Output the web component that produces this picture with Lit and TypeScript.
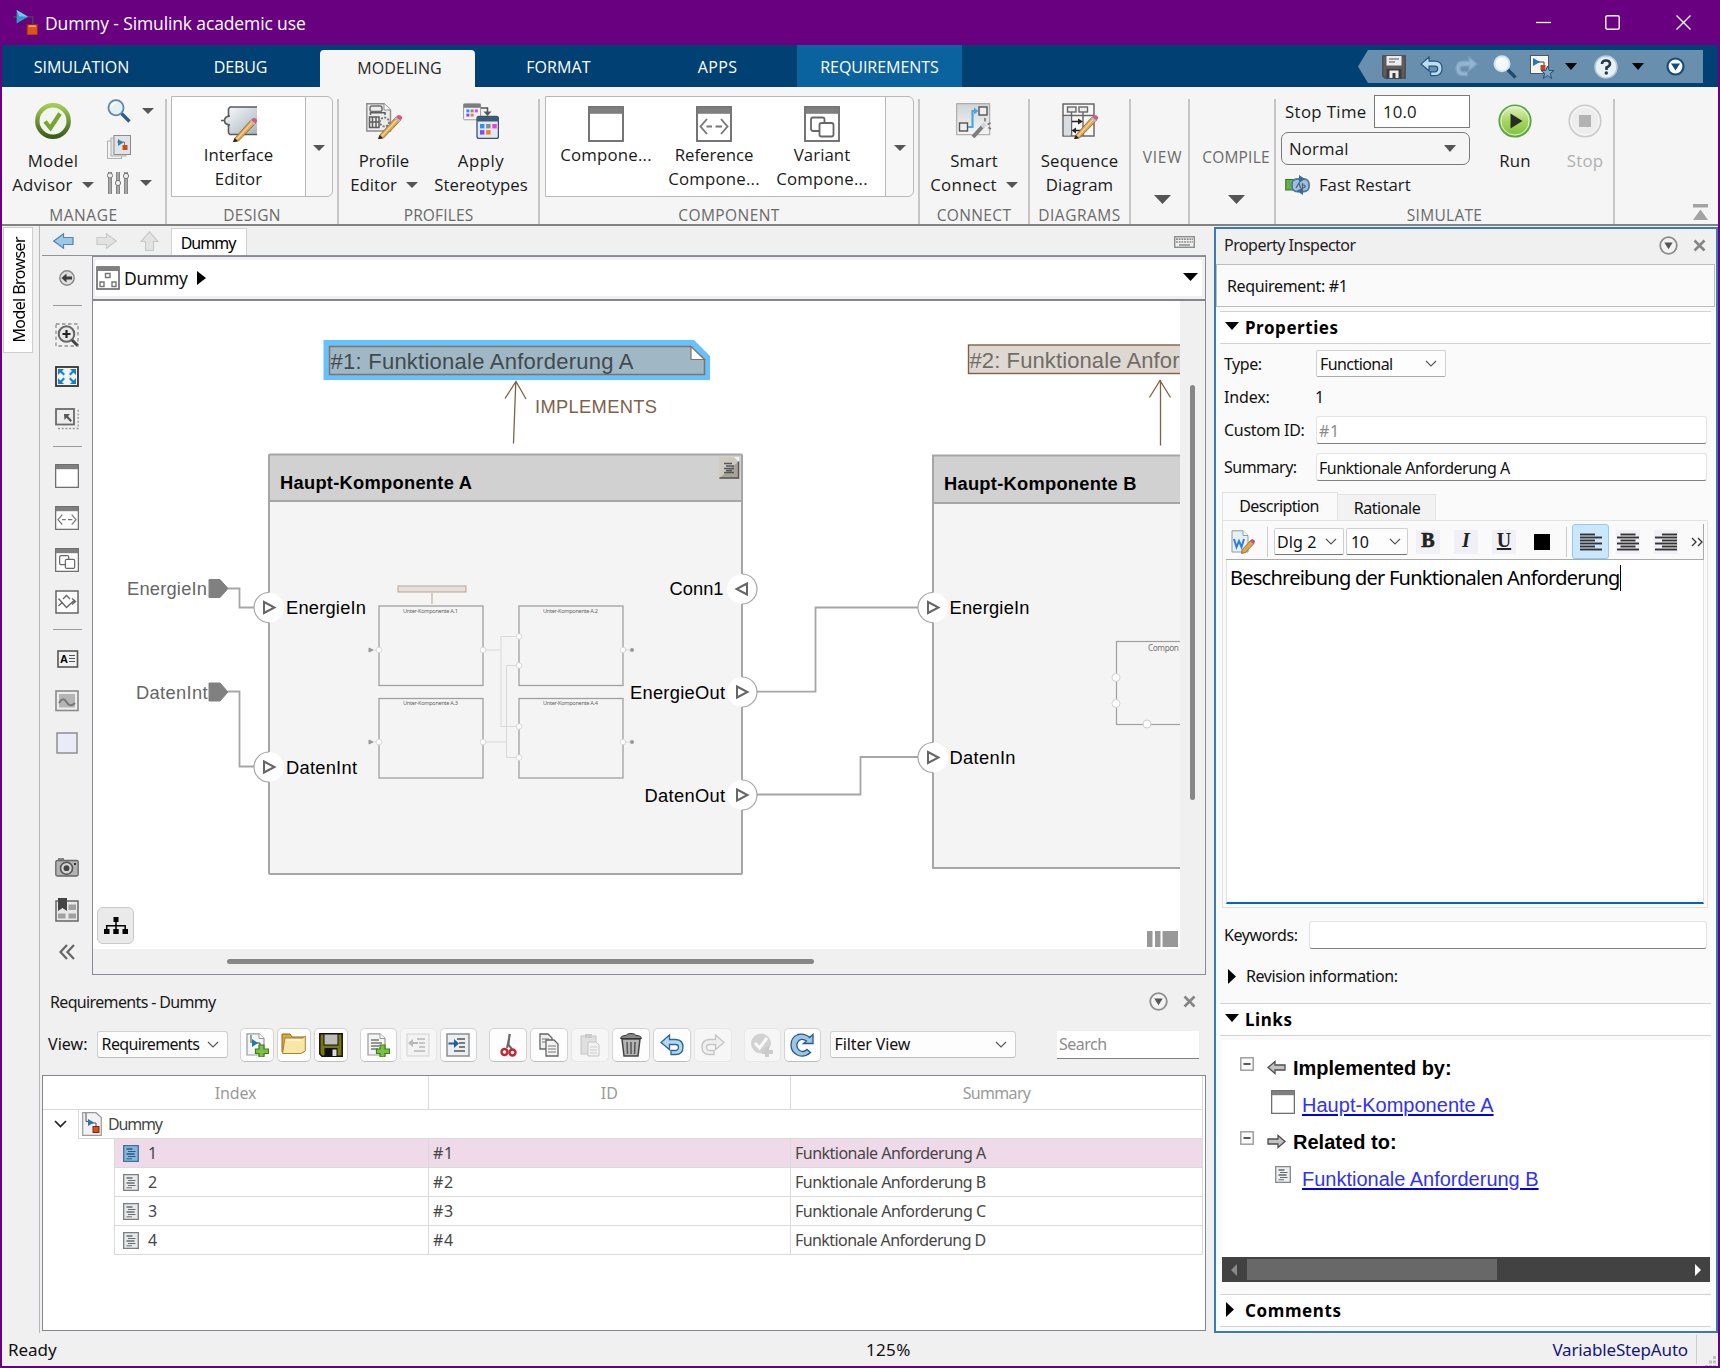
import { LitElement, html, svg, css, type TemplateResult } from "lit";
import { customElement } from "lit/decorators.js";

/* ---------- shared helpers ---------- */

/** Text whose tracking is adjusted so that it spans `w` pixels. */
const t = (s: string, w: number, cls = "") => html`<span class="t ${cls}" data-w=${w}>${s}</span>`;

const ico = (w: number, h: number, body: unknown, vb = `0 0 ${w} ${h}`) =>
  html`<svg class="ico" width=${w} height=${h} viewBox=${vb} fill="none">${body}</svg>`;

class Pane extends LitElement {
  protected updated() {
    this.renderRoot.querySelectorAll<HTMLElement>("[data-w]").forEach((el) => {
      el.style.letterSpacing = "0px";
      const box = el.getBoundingClientRect();
      const len = el.classList.contains("vert") ? box.height : box.width;
      const n = (el.textContent || "").length;
      const gap = (Number(el.dataset.w) + 1.6 - len) / n;
      el.style.letterSpacing = gap.toFixed(3) + "px";
    });
  }
}

const base = css`
  * { box-sizing: border-box; }
  :host { display: block; box-sizing: border-box; font-family: "Noto Sans", "Open Sans", sans-serif; font-size: 16px; line-height: 1; color: #1a1a1a; }
  .t { white-space: pre; display: inline-block; line-height: 22px; }
  .ico { display: block; flex: none; }
  .row { display: flex; align-items: center; }
  .col { display: flex; flex-direction: column; }
  .grow { flex: 1; }
`;

/* ---------- icons ---------- */

const caret = (w = 12, h = 6, c = "#555") => ico(w, h, svg`<path d="M0 0H${w}L${w / 2} ${h}Z" fill=${c}/>`);
const chevron = () => ico(12, 7, svg`<path d="M1 1L6 6L11 1" stroke="#555" stroke-width="1.1"/>`);
const triRight = () => ico(8, 15, svg`<path d="M0 0L8 7.500L0 15Z" fill="#000"/>`);
const triDown = () => ico(14, 8, svg`<path d="M0 0H14L7 8Z" fill="#000"/>`);

const pencil = svg`<path d="M13.500 32.500L30 14L34.500 17.500L17.500 35L12.500 36.500Z" fill="#dca552" stroke="#8a6229" stroke-width=".8"/>
  <path d="M15.500 33.500L32 15.500" stroke="#f3d49c" stroke-width="1.300"/>
  <path d="M29.500 14.500L32 12Q36 12 36.500 15L34 18Z" fill="#d8587c"/><path d="M28.500 15.500L30 14L34.500 17.500L33 19.300Z" fill="#bbb"/>
  <path d="M13.800 32L12 36.500L16.700 35Z" fill="#222"/>`;

const lens = (s: number, glass = "#e4f0f8", rim = "#5b87a8", handle = "#2d5d88") => ico(s, s, svg`
  <path d="M14.500 14.500L22.500 22.500" stroke=${handle} stroke-width="3.400"/>
  <circle cx="9" cy="8.800" r="7.600" fill=${glass} stroke=${rim} stroke-width="1.800"/>
  <path d="M4 8.500Q5 4 9.500 3.800" stroke="#fff" stroke-width="2"/>`, "0 0 24 24");

const simLogo = (w: number) => ico(w, w, svg`
  <path d="M0 6.500H5M11 6.500H19V14" stroke="#4b4a55" stroke-width="1.200"/>
  <path d="M3.500 0L14.500 6.500L3.500 13Z" fill="#2e9bc9"/><path d="M3.500 0L14.500 6.500L6 6Z" fill="#7cc6e2"/>
  <rect x="13.500" y="14" width="10" height="10" fill="#d9541e" stroke="#8d2f0c"/><path d="M15 15.500H22" stroke="#f2a27c" stroke-width="1.500"/>`, "0 0 24 24");

const checkBig = ico(36, 36, svg`
  <defs><linearGradient id="ck" x2="0" y2="1"><stop stop-color="#a5cc52"/><stop offset="1" stop-color="#3c5d1a"/></linearGradient></defs>
  <circle cx="18" cy="18" r="15.700" fill="#f2f4ef" stroke="url(#ck)" stroke-width="4.400"/>
  <path d="M10 18.500L15.500 25L25 10.500" stroke="#76a631" stroke-width="4.200"/>`);

const modelPages = ico(24, 24, svg`
  <rect x=".5" y="6" width="14" height="17.500" fill="#f3f3f3" stroke="#b0b0b0"/><rect x="4" y="3" width="15" height="18" fill="#e2e2e2" stroke="#b0b0b0"/>
  <rect x="7" y=".5" width="16.500" height="19" fill="#dfe4e8" stroke="#8c8c8c"/>
  <path d="M11 4L16.500 7.500L11 11Z" fill="#2e86b9"/><rect x="15.500" y="10" width="5" height="5" fill="#cf4a1c"/><path d="M10 7H17.500V10" stroke="#666" stroke-width=".8"/>`);

const sliders = ico(22, 24, svg`
  <path d="M3 1V23M11 1V23M19 1V23" stroke="#858585" stroke-width="4"/><path d="M3 1V23M11 1V23M19 1V23" stroke="#c9c9c9" stroke-width="1"/>
  <circle cx="3" cy="4.500" r="2.600" fill="#efefef" stroke="#777"/><circle cx="11" cy="12" r="2.600" fill="#efefef" stroke="#777"/><circle cx="19" cy="5" r="2.600" fill="#efefef" stroke="#777"/>`);

const interfaceIcon = ico(36, 36, svg`
  <defs><linearGradient id="ie" x2="1" y2="1"><stop stop-color="#fbfcfd"/><stop offset="1" stop-color="#a5b4c0"/></linearGradient></defs>
  <path d="M36 1H9L7.500 3V10Q3.500 10.500 3.500 14.500Q3.500 18.500 7.500 19V27L9 28.500H36Z" fill="url(#ie)"/>
  <path d="M36 1H9L7.500 3V10M7.500 19V27L9 28.500H36" stroke="#5a5a5a" stroke-width="1.600"/>
  <path d="M0 14.500H3.500M9 10Q3.500 10.500 3.500 14.500Q3.500 18.500 9 19" stroke="#5a5a5a" stroke-width="1.700"/>${pencil}`);

const profileIcon = ico(36, 36, svg`
  <path d="M.8 .8H18L24.500 7V28H.8Z" fill="#ececec" stroke="#8c8c8c" stroke-width="1.400"/><path d="M18 .8V7H24.500" fill="#fff" stroke="#8c8c8c"/>
  <rect x="4" y="3" width="12" height="5.500" rx="2" stroke="#6f6f6f" stroke-width="1.500"/><path d="M4.500 12V9.800H19V12M3.500 14H13V24.500H3.500ZM6.500 14V24.500M10 14V24.500M3.500 19H13" stroke="#5d5d5d" stroke-width="1.500"/>
  <circle cx="18.500" cy="19" r="4.500" stroke="#777" stroke-width="1.800" stroke-dasharray="2 1.400"/>${pencil}`);

const dots = (x: number, y: number, s: number) => svg`
  <rect x=${x} y=${y} width=${s} height=${s} fill="#2f8ff0"/><rect x=${x + s * 1.4} y=${y} width=${s} height=${s} fill="#8a8a8a"/><rect x=${x + s * 2.8} y=${y} width=${s} height=${s} fill="#f43be0"/>
  <rect x=${x} y=${y + s * 1.4} width=${s} height=${s} fill="#8748f0"/><rect x=${x + s * 1.4} y=${y + s * 1.4} width=${s} height=${s} fill="#fb7a1c"/>`;

const stereoIcon = ico(36, 36, svg`
  <rect x=".6" y=".8" width="17" height="16" rx="1" fill="#f2f5f8" stroke="#9b9b9b"/><rect x=".6" y=".8" width="17" height="4" fill="#7d7d7d"/>${dots(3.4, 6.4, 3)}
  <path d="M18 5H24.500V9" stroke="#555" stroke-width="1.500"/><path d="M20.500 8.500H28.500L24.500 13Z" fill="#555"/>
  <rect x="14" y="13.500" width="21.400" height="22" rx="2" fill="#dfeaf5" stroke="#37536e" stroke-width="1.300"/><path d="M14 18.500V15Q14 13.500 16 13.500H33.500Q35.400 13.500 35.400 15V18.500Z" fill="#3d5a76"/>${dots(17, 21, 4.400)}`);

const winBody = (kind: string) => svg`
  <rect x="1" y="1" width="34" height="34" fill="#fff" stroke="#666" stroke-width="1.800"/><rect x="1.500" y="1.500" width="33" height="6.300" fill="#7f7f7f"/>
  ${kind === "ref" ? svg`<path d="M11 13L4.500 20.500L11 28M25 13L31.500 20.500L25 28" stroke="#777" stroke-width="1.900"/><path d="M10.500 20.500H16M19.500 20.500H26" stroke="#777" stroke-width="1.900"/>` : ""}
  ${kind === "var" ? svg`<rect x="7" y="11.500" width="13.500" height="13.500" rx="2" stroke="#666" stroke-width="1.800"/><rect x="15.500" y="17" width="14" height="13.500" rx="2" fill="#fff" stroke="#666" stroke-width="1.800"/>` : ""}`;
const win = (kind: string, s = 36) => ico(s, s, winBody(kind), "0 0 36 36");

const smartIcon = ico(36, 36, svg`
  <defs><linearGradient id="sm" x2="0" y2="1"><stop stop-color="#d2d4d6"/><stop offset="1" stop-color="#f5f5f5"/></linearGradient></defs>
  <rect x=".7" y=".7" width="33" height="31" fill="url(#sm)" stroke="#a0a0a0"/>
  <rect x="3.500" y="20" width="8" height="8" fill="#eee" stroke="#555" stroke-width="1.400"/><rect x="23" y="4" width="8" height="8" fill="#eee" stroke="#555" stroke-width="1.400"/>
  <path d="M12 24H16.500V8H20" stroke="#4aa7e4" stroke-width="2.200"/><path d="M18 4.500L22.500 8L18 11.500Z" fill="#4aa7e4"/>
  <path d="M17 34L27 23" stroke="#7d7d7d" stroke-width="4"/><path d="M26 24L29 20.500" stroke="#d2d2d2" stroke-width="4"/>
  <path d="M29 15V18.500M34.500 20L31.500 21.500M35 26L32.500 24.500" stroke="#777" stroke-width="1.600"/>`);

const sequenceIcon = ico(36, 36, svg`
  <rect x="1" y="1" width="31" height="32" fill="#f7f7f7" stroke="#686868" stroke-width="1.500"/>
  <rect x="5.500" y="4" width="8.500" height="5" fill="#eee" stroke="#666" stroke-width="1.400"/><rect x="17" y="4" width="8.500" height="5" fill="#eee" stroke="#666" stroke-width="1.400"/>
  <path d="M1 12.500H32M9.500 9V33M21 9V33" stroke="#666" stroke-width="1.400"/><rect x="2" y="13.500" width="6.500" height="19" fill="#d8dde2"/>
  <path d="M10 18.500H18M12.500 27.500H20" stroke="#222" stroke-width="1.600"/><path d="M16 15.500L21 18.500L16 21.500ZM14 24.500L9.500 27.500L14 30.500Z" fill="#222"/>${pencil}`);

const fastRestart = ico(25, 20, svg`
  <rect x=".7" y="4.500" width="9" height="10.500" fill="#65b143" stroke="#397324"/><rect x="7" y="4" width="17" height="12.500" rx="5" fill="#9fc0dc" stroke="#4c7aa4" stroke-width="1.800"/>
  <path d="M14 0L20 4L14 8ZM18 20L12 16L18 12Z" fill="#3c6a96"/><path d="M11 13L14 8L15.500 13M17.500 8V13Q20.500 13 20 10.500Q19 9.500 17.500 10.500" stroke="#4a5f74" stroke-width="1.200"/>`);

const runIcon = ico(34, 34, svg`
  <defs><linearGradient id="rn" x2="0" y2="1"><stop stop-color="#e2f3cc"/><stop offset=".5" stop-color="#a7d660"/><stop offset="1" stop-color="#7dbf3d"/></linearGradient></defs>
  <circle cx="17" cy="17" r="15.800" fill="url(#rn)" stroke="#5aa348" stroke-width="1.600"/><circle cx="17" cy="17" r="14" stroke="#e4f5cf" stroke-width="1"/>
  <path d="M12.500 9.500L24.500 17L12.500 24.500Z" fill="#262e22"/>`);
const stopIcon = ico(34, 34, svg`
  <circle cx="17" cy="17" r="15.800" fill="#ededed" stroke="#cbcbcb" stroke-width="1.600"/><circle cx="17" cy="17" r="14" stroke="#fafafa"/><rect x="11" y="11" width="12" height="12" fill="#b3b3b3"/>`);

const undoPath = "M1 9.500L9.500 2V6.500H16Q23 7 23 14Q23 21.500 15.500 21.500H11V17.500H15Q18.500 17.500 18.500 14Q18.500 11.500 15.500 11.500H9.500V16.500Z";
const undo = (fill: string, stroke: string, w = 24) => ico(w, w, svg`<path d=${undoPath} fill=${fill} stroke=${stroke} stroke-width="1.300"/>`, "0 0 24 24");
const redo = (fill: string, stroke: string, w = 24) => ico(w, w, svg`<g transform="translate(24 0) scale(-1 1)"><path d=${undoPath} fill=${fill} stroke=${stroke} stroke-width="1.300"/></g>`, "0 0 24 24");

const floppyGrey = ico(24, 24, svg`
  <path d="M.8 .8H23.200V23.200H3L.8 21Z" fill="#5d5d5d" stroke="#4a4a4a" stroke-width="1.300"/>
  <rect x="4.500" y="1" width="15" height="9.500" fill="#ececec"/><path d="M7 4H17M7 7H13" stroke="#888" stroke-width="1.500"/>
  <rect x="4.500" y="14" width="15" height="9.500" fill="#3c3c3c"/><path d="M7.500 15.500H16.500V23H13.500V18H10.500V23H7.500Z" fill="#eee"/>`);
const floppyDark = ico(24, 24, svg`
  <path d="M.8 .8H23.200V23.200H3L.8 21Z" fill="#77760f" stroke="#111" stroke-width="1.500"/>
  <rect x="5" y="1" width="14" height="11" fill="#bdbdbd" stroke="#111"/><rect x="5.500" y="15" width="13" height="8.500" fill="#111"/><rect x="13.500" y="16.500" width="4" height="6.500" fill="#ddd"/>`);

const closeX = ico(13, 13, svg`<path d="M1.500 1.500L11.500 11.500M11.500 1.500L1.500 11.500" stroke="#858585" stroke-width="2.600"/>`);
const menuDot = ico(19, 19, svg`<circle cx="9.500" cy="9.500" r="8.300" fill="#f3f3f3" stroke="#8d8d8d" stroke-width="1.800"/><path d="M5.300 6.500H13.700L9.500 13.200Z" fill="#555"/>`);

const note = (w: number, h: number, fill: string, edge: string, line: string) => ico(w, h, svg`
  <path d="M.7 .7H15.300V16.300H.7Z" fill=${fill} stroke=${edge} stroke-width="1.300"/>
  <path d="M3.500 4H9.500M3.500 9H11.500" stroke=${line} stroke-width="1.300"/><path d="M5 6.500H12.500M5 11.500H12.500M3.500 13.800H9" stroke=${line} stroke-width="1"/>`, "0 0 16 17");

/* ---------- ribbon ---------- */

@customElement("tool-strip")
class ToolStrip extends Pane {
  static styles = [base, css`
    :host { font-family: "Open Sans", "Noto Sans", sans-serif; font-size: 16.800px; }
    .tabs { height: 42px; background: #004073; color: #fff; font-size: 16px; align-items: stretch; }
    .tab { width: 159px; display: flex; align-items: center; justify-content: center; padding-top: 2px; }
    .tab.active { width: 155px; margin: 5px 4px 0 0; background: #f5f5f5; color: #262626; border-radius: 4px 4px 0 0; padding: 0 0 2px 4px; }
    .tab.ctx { width: 165px; background: #0a629f; }
    .qat { width: 345px; height: 33px; margin: 5px 15px 0 0; padding-left: 24px; background: #688fae; clip-path: polygon(10px 0, 100% 0, 100% 100%, 10px 100%, 0 50%); }
    .q1 { margin-left: 14px; } .q2 { margin-left: 12px; } .q3 { margin-left: 15px; } .q4 { margin-left: 13px; } .q5 { margin-left: 11px; } .q6 { margin-left: 17px; } .q7 { margin-left: 14px; } .q8 { margin-left: 22px; }
    .strip { height: 139px; background: #f5f5f5; border-bottom: 2px solid #828282; align-items: flex-start; }
    .sec { margin-top: 12px; height: 125px; border-right: 2px solid #c6c6c6; display: flex; flex-direction: column; flex: none; }
    .body { height: 106px; display: flex; align-items: flex-start; }
    .cap { height: 20px; display: flex; justify-content: center; align-items: center; color: #6a6a6a; font-size: 15.500px; padding-top: 2px; }
    .w-manage { width: 165px; } .w-design { width: 172px; } .w-prof { width: 201px; } .w-comp { width: 380px; }
    .w-conn { width: 110px; } .w-diag { width: 101px; } .w-view { width: 59px; } .w-compile { width: 86px; } .w-sim { width: 339px; }
    .big { display: flex; flex-direction: column; align-items: center; padding-top: 4px; width: 100%; flex: none; }
    .big .ico:first-child { margin-bottom: 9px; }
    .ln { height: 24px; display: flex; align-items: center; gap: 9px; padding-top: 2px; }
    .ln .ico.ico { margin: 0; }
    .b102 { width: 102px; } .b90 { width: 90px; } .b104 { width: 104px; }
    .small { gap: 12px; padding-left: 3px; }
    .small .row { gap: 11px; height: 24px; }
    .gal { margin-top: -3px; height: 101px; border: 1px solid #b9b9b9; border-radius: 0 6px 6px 0; display: flex; background: #f7f7f7; }
    .gal-d { margin-left: 4px; width: 162px; } .gal-c { margin-left: 5px; width: 369px; }
    .items { flex: 1; background: #fff; display: flex; border-right: 1px solid #b9b9b9; }
    .gal-c .items { padding-left: 6px; }
    .item { width: 108px; display: flex; flex-direction: column; align-items: center; padding-top: 9px; }
    .gal-d .item { width: 133px; }
    .more { width: 27px; display: flex; align-items: center; justify-content: center; padding-top: 2px; }
    .tall { height: 126px; align-items: center; padding: 47px 0 0 8px; color: #6a6a6a; font-size: 15.500px; }
    .tall .ico { margin-top: 27px; }
    .w-view .tall { padding-left: 6px; }
    .sim { margin: -4px 10px 0 5px; width: 189px; gap: 4px; flex: none; }
    .stop { height: 33px; padding-left: 4px; justify-content: space-between; }
    .edit { width: 96px; height: 33px; border: 1px solid #7a7a7a; background: #fff; padding-left: 8px; }
    .pick { height: 33px; border: 1px solid #7a7a7a; border-radius: 7px; padding: 0 13px 0 7px; justify-content: space-between; }
    .fast { height: 32px; gap: 9px; padding-left: 4px; }
    .b70 { width: 70px; padding-top: 5px; } .b70 .ico:first-child { margin-bottom: 10px; }
    .dim { color: #b0b0b0; }
    .fold { align-self: flex-end; margin: 0 10px 4px auto; }
  `];

  private gallery(items: [TemplateResult, [string, number][]][], cls: string) {
    return html`<div class="gal ${cls}"><div class="items">
      ${items.map(([icon, lines]) => html`<div class="item">${icon}${lines.map(([s, w]) => html`<div class="ln">${t(s, w)}</div>`)}</div>`)}
    </div><div class="more">${caret()}</div></div>`;
  }

  private big(icon: TemplateResult, a: [string, number], b?: [string, number], more = false, cls = "") {
    return html`<div class="big ${cls}">${icon}<div class="ln">${t(a[0], a[1])}</div>
      ${b ? html`<div class="ln">${t(b[0], b[1])}${more ? caret() : ""}</div>` : ""}</div>`;
  }

  render() {
    return html`
      <div class="tabs row">
        <div class="tab">${t("SIMULATION", 94)}</div><div class="tab">${t("DEBUG", 52)}</div>
        <div class="tab active">${t("MODELING", 83)}</div>
        <div class="tab">${t("FORMAT", 63)}</div><div class="tab">${t("APPS", 38)}</div>
        <div class="tab ctx">${t("REQUIREMENTS", 117)}</div>
        <div class="grow"></div>
        <div class="qat row">
          ${floppyGrey}
          <div class="q1">${undo("#bcdcf2", "#27567f", 23)}</div>
          <div class="q2">${redo("#93b5cf", "#7da2bf", 23)}</div>
          <div class="q3">${lens(24, "#f2f8fc", "#cfe0ee", "#22496e")}</div>
          <div class="q4">${ico(24, 24, svg`<rect x=".5" y=".5" width="18" height="18" fill="#f4f4f4" stroke="#555"/><path d="M3 3L10 7L3 11Z" fill="#2478ae"/><path d="M8 7H14V12" stroke="#444"/><rect x="10.500" y="10" width="5" height="5" fill="#c8401d"/><path d="M17.500 11L19.200 15.500H24L20.300 18.500L21.700 23.500L17.500 20.500L13.300 23.500L14.700 18.500L11 15.500H15.800Z" fill="#7fa9cb" stroke="#284e72"/>`)}</div>
          <div class="q5">${caret(12, 7, "#000")}</div>
          <div class="q6">${ico(24, 24, svg`<circle cx="12" cy="12" r="11" fill="#e9f1f7" stroke="#b4cadc" stroke-width="1.500"/><path d="M8 9Q8 5.500 12 5.500Q16 5.500 16 9Q16 11 12.500 12.500V15" stroke="#24384a" stroke-width="2.600"/><circle cx="12.300" cy="18" r="1.700" fill="#24384a"/>`)}</div>
          <div class="q7">${caret(12, 7, "#000")}</div>
          <div class="q8">${ico(19, 19, svg`<circle cx="9.500" cy="9.500" r="8" fill="#fff" stroke="#194a7c" stroke-width="2.200"/><path d="M5 6.500H14L9.500 13.500Z" fill="#194a7c"/>`)}</div>
        </div>
      </div>
      <div class="strip row">
        <div class="sec w-manage"><div class="body">
          ${this.big(checkBig, ["Model", 49], ["Advisor", 59], true, "b102")}
          <div class="small col">
            <div class="row">${lens(24)}${caret()}</div>
            <div class="row">${modelPages}</div>
            <div class="row">${sliders}${caret()}</div>
          </div></div><div class="cap">${t("MANAGE", 67)}</div></div>
        <div class="sec w-design"><div class="body">
          ${this.gallery([[interfaceIcon, [["Interface", 68], ["Editor", 46]]]], "gal-d")}</div><div class="cap">${t("DESIGN", 56)}</div></div>
        <div class="sec w-prof"><div class="body">
          ${this.big(profileIcon, ["Profile", 49], ["Editor", 45], true, "b90")}
          ${this.big(stereoIcon, ["Apply", 45], ["Stereotypes", 92], false, "b104")}</div><div class="cap">${t("PROFILES", 68)}</div></div>
        <div class="sec w-comp"><div class="body">
          ${this.gallery([[win("plain"), [["Compone...", 90]]], [win("ref"), [["Reference", 77], ["Compone...", 90]]], [win("var"), [["Variant", 55], ["Compone...", 90]]]], "gal-c")}
          </div><div class="cap">${t("COMPONENT", 100)}</div></div>
        <div class="sec w-conn"><div class="body">${this.big(smartIcon, ["Smart", 46], ["Connect", 65], true)}</div><div class="cap">${t("CONNECT", 73)}</div></div>
        <div class="sec w-diag"><div class="body">${this.big(sequenceIcon, ["Sequence", 76], ["Diagram", 66])}</div><div class="cap">${t("DIAGRAMS", 81)}</div></div>
        <div class="sec w-view"><div class="tall col">${t("VIEW", 38)}${caret(17, 9)}</div></div>
        <div class="sec w-compile"><div class="tall col">${t("COMPILE", 66)}${caret(17, 9)}</div></div>
        <div class="sec w-sim"><div class="body">
          <div class="sim col">
            <div class="stop row">${t("Stop Time", 80)}<div class="edit row">${t("10.0", 32)}</div></div>
            <div class="pick row">${t("Normal", 58)}${caret(12, 7)}</div>
            <div class="fast row">${fastRestart}${t("Fast Restart", 90)}</div>
          </div>
          ${this.big(runIcon, ["Run", 30], undefined, false, "b70")}
          <div class="dim">${this.big(stopIcon, ["Stop", 35], undefined, false, "b70")}</div>
          </div><div class="cap">${t("SIMULATE", 74)}</div></div>
        <div class="fold">${ico(15, 16, svg`<rect width="15" height="3.500" fill="#a3a3a3"/><path d="M7.500 5.500L15 16H0Z" fill="#a3a3a3"/>`)}</div>
      </div>`;
  }
}

/* ---------- model canvas ---------- */

const port = (x: number, y: number, dir: "in" | "out" | "conn", side: "l" | "r") => svg`
  <circle cx=${x} cy=${y} r="15" fill="#fff"/>
  <path d="M${x} ${y - 15}A15 15 0 0 ${side === "l" ? 0 : 1} ${x} ${y + 15}" stroke="#a6a6a6" stroke-width="1.200"/>
  ${dir === "conn"
    ? svg`<path d="M${x + 5} ${y - 5.500}V${y + 5.500}L${x - 5.500} ${y}Z" stroke="#666" stroke-width="2"/>`
    : svg`<path d="M${x - 5} ${y - 5.500}V${y + 5.500}L${x + 5.500} ${y}Z" stroke="#666" stroke-width="2"/>`}`;

const mini = (x: number, y: number, n: number, ins: number[], outY: number) => svg`
  <rect x=${x} y=${y} width="104" height="79.500" stroke="#a0a0a0" stroke-width="1.300"/>
  <text class="tiny" x=${x + 24} y=${y + 6.500} textLength="55">Unter-Komponente A.${n}</text>
  ${[...ins.map((iy) => [x, iy]), [x + 104, outY]].map(([cx, cy]) => svg`<circle cx=${cx} cy=${cy} r="2.800" fill="#fff" stroke="#d2d2d2" stroke-width=".8"/>`)}`;

@customElement("model-editor")
class ModelEditor extends Pane {
  static styles = [base, css`
    :host { display: flex; flex-direction: column; height: 749px; }
    .nav { height: 29px; padding-left: 13px; flex: none; }
    .a2 { margin-left: 22px; } .a3 { margin-left: 23px; }
    .doc { align-self: flex-end; margin-left: 12px; width: 76px; height: 27px; background: #fff; border: 1px solid #d2d2d2; border-bottom: 0; display: flex; justify-content: center; align-items: center; color: #000; padding: 1px 2px 0 0; }
    .kb { margin: 3px 11px 0 auto; }
    .lower { display: flex; height: 720px; border-top: 1px solid #8c959a; margin-left: 2px; }
    .palette { width: 50px; align-items: center; padding-top: 10px; }
    .sep { width: 29px; height: 1px; background: #9b9b9b; margin: 15px 0 17px; }
    .gap { margin-top: 18px; flex: none; } .far { margin-top: 101px; }
    .frame { flex: 1; border: 1px solid #878a94; display: flex; flex-direction: column; background: #f0f0f0; }
    .crumb { height: 42px; border: 3px solid #f0f0f0; border-width: 3px 3px 3px 2px; background: #fff; padding: 0 4px 0 1px; font-size: 17.500px; color: #111; }
    .crumb .t { margin: 0 9px 0 4px; }
    .crumb .end { margin-left: auto; padding-bottom: 3px; }
    .view { border-top: 2px solid #858590; display: grid; grid-template: 648px 25px / 1087px 25px; }
    .plane { background: #fff; position: relative; }
    .plane > svg { display: block; }
    .tree { position: absolute; left: 4px; top: 606px; width: 37px; height: 37px; border: 1px solid #c9c9c9; border-radius: 6px; background: #eaeaea; display: flex; align-items: center; justify-content: center; }
    .vbar { width: 5px; height: 415px; margin: 84px 0 0 10px; border-radius: 3px; background: #878787; }
    .hbar { height: 5px; width: 587px; margin: 10px 0 0 134px; border-radius: 3px; background: #878787; }
    text { font-family: "Liberation Sans", Arial, sans-serif; font-size: 18.300px; fill: #000; }
    .bold { font-weight: bold; }
    .ext { fill: #666; }
    .tiny { font-family: "Noto Sans", sans-serif; font-size: 5.600px; fill: #666; }
    .mid { font-family: "Noto Sans", sans-serif; font-size: 8.300px; fill: #777; }
    .req { font-size: 22px; fill: #424a4d; }
    .req2 { fill: #6f6c69; }
    .impl { fill: #7d6247; }
    .glyph { font: bold 11px "Liberation Sans", sans-serif; }
  `];

  private palette() {
    const arrows = svg`<path d="M3 3H9L7 5L10 8L8.500 9.500L5.500 6.500L3 9Z" fill="#1b7fc4"/>`;
    return html`<div class="palette col">
      ${ico(24, 24, svg`<circle cx="12" cy="12" r="7.200" fill="#ddd" stroke="#888" stroke-width="1.400"/><path d="M6.500 12L11.500 7.500V10.500H17V13.500H11.500V16.500Z" fill="#3c3c3c"/>`)}
      <div class="sep"></div>
      ${ico(24, 24, svg`<rect x="1" y="1" width="22" height="22" stroke="#909090" stroke-width="1.300" stroke-dasharray="3.500 2.500"/><circle cx="11.500" cy="11" r="7.800" fill="#e8e8e8" stroke="#666" stroke-width="2"/><path d="M17 17L22.500 22.500" stroke="#444" stroke-width="3"/><path d="M11.500 7V15M7.500 11H15.500" stroke="#222" stroke-width="2.200"/>`)}
      <div class="gap">${ico(24, 24, svg`<rect x="1" y="2" width="22" height="19" fill="#eef5fa" stroke="#333" stroke-width="1.800"/><g transform="translate(0 1)">${arrows}</g><g transform="translate(24 1) scale(-1 1)">${arrows}</g><g transform="translate(0 22) scale(1 -1)">${arrows}</g><g transform="translate(24 22) scale(-1 -1)">${arrows}</g>`)}</div>
      <div class="gap">${ico(24, 24, svg`<path d="M3 21.500H23.200V2" stroke="#999" stroke-width="1.300" stroke-dasharray="2 1.700"/><rect x="1" y="2" width="18" height="15.500" fill="#ededed" stroke="#6a6a6a" stroke-width="1.800"/><path d="M9 7H15L13 9L17 13.500L15.500 15L11.500 10.800L9.500 13Z" fill="#555"/>`)}</div>
      <div class="sep"></div>
      ${win("plain", 24)}<div class="gap">${win("ref", 24)}</div><div class="gap">${win("var", 24)}</div>
      <div class="gap">${ico(24, 24, svg`<rect x="1" y="1" width="22" height="22" fill="#fff" stroke="#666" stroke-width="1.500"/><path d="M3.500 8.500L11.500 17.500L18 11.500H20M3.500 16L7 12.500M8 9L11.500 5.500L15 9M17 8.500L20.500 11.500L17 14.500" stroke="#666" stroke-width="1.400"/>`)}</div>
      <div class="sep"></div>
      ${ico(24, 24, svg`<rect x="3" y="4" width="19.500" height="16" fill="#f2f2f2" stroke="#555" stroke-width="1.600"/><text class="glyph" x="5" y="16">A</text><path d="M14 8.500H20M14 11.500H20M14 14.500H20" stroke="#555" stroke-width="1.200"/>`)}
      <div class="gap">${ico(24, 24, svg`<rect x="1" y="2" width="22" height="19.500" fill="#eee" stroke="#8a8a8a" stroke-width="1.600"/><rect x="4" y="5" width="16" height="13.500" fill="#b5b5b5"/><path d="M4 14Q8 7 11.500 13T20 14" stroke="#777" stroke-width="2"/>`)}</div>
      <div class="gap">${ico(24, 24, svg`<rect x="2" y="2" width="20" height="20" fill="#eaeaf8" stroke="#8f8f8f" stroke-width="1.500"/>`)}</div>
      <div class="far">${ico(24, 24, svg`<rect x="3" y="2" width="6" height="3" fill="#888"/><rect x=".8" y="4.500" width="22.400" height="15.500" rx="1.500" fill="#b3b3b3" stroke="#666" stroke-width="1.300"/><circle cx="11.500" cy="12.200" r="6" fill="#d4d4d4" stroke="#555" stroke-width="1.600"/><circle cx="11.500" cy="12.200" r="2.900" fill="#444"/><rect x="19" y="7" width="2" height="2" fill="#333"/>`)}</div>
      <div class="gap">${ico(24, 24, svg`<rect x="1" y="3" width="22" height="20" fill="#e8e8e8" stroke="#666" stroke-width="1.500"/><path d="M13.500 6.500H21V12H13.500ZM3 15.500H10.500V20.500H3ZM13.500 15.500H21V20.500H13.500Z" fill="#a0a0a0"/><path d="M3 0H12V13L7.500 10L3 13Z" fill="#444"/>`)}</div>
      <div class="gap">${ico(24, 24, svg`<path d="M12 5L5.500 12L12 19M19 5L12.500 12L19 19" stroke="#666" stroke-width="2.200"/>`)}</div>
    </div>`;
  }

  private diagram() {
    const wire = "#a6a6a6";
    const brown = "#7d6247";
    return html`<svg width="1087" height="648" viewBox="93 301 1087 648" fill="none">
      <path d="M323.500 340H694L710 356V380H323.500Z" fill="#66c2ff"/>
      <path d="M329.500 346.500H690.500L704.500 359.500V374.500H329.500Z" fill="#a0b7c6" stroke="#857260" stroke-width="1.500"/>
      <path d="M691 346.500V359.500H704.500Z" fill="#fff" stroke="#857260" stroke-width="1.200"/>
      <text class="req" x="330.500" y="369" textLength="303">#1: Funktionale Anforderung A</text>
      <path d="M513.500 443.500L515.800 381M505 398.500L516 381.500L526 399" stroke=${brown} stroke-width="1.300"/>
      <text class="impl" x="535" y="413" textLength="122">IMPLEMENTS</text>

      <rect x="269" y="454.500" width="473" height="419.500" fill="#f4f4f4"/><rect x="269" y="454.500" width="473" height="47" fill="#d1d1d1"/>
      <rect x="269" y="454.500" width="473" height="419.500" rx="1" stroke="#a6a6a6" stroke-width="2"/><path d="M269 501H742" stroke="#a6a6a6" stroke-width="2"/>
      <text class="bold" x="280" y="489" textLength="192">Haupt-Komponente A</text>
      <rect x="719" y="457" width="20" height="21.500" fill="#cfc9c0"/><path d="M739 461V478.500H719L739 461Z" fill="#aaa298"/><path d="M719.500 478H738.500V461" stroke="#555" stroke-width="1.400"/><path d="M734 457H739V462Z" fill="#f4f4f4"/>
      <path d="M724 463.500H732M724 468.500H734M724 472.500H734M726 466H734M726 470.500H732" stroke="#555" stroke-width="1.300"/>

      <rect x="398" y="586" width="68" height="6" fill="#e8e0d8" stroke="#b5a595"/><path d="M432 593V604" stroke="#b5a595"/>
      <path d="M483 650H500.500M519 636.500H501V726.500H519M483 742H506.500M519 665.500H506.500V757.500H519M371 650H379M371 742H379M623 650H632M623 742H632" stroke="#d8d8d8"/>
      <path d="M369 648V652L373 650ZM369 740V744L373 742Z" fill="#999" stroke="#999"/><circle cx="632" cy="650" r="2" fill="#999"/><circle cx="632" cy="742" r="2" fill="#999"/>
      ${mini(379, 606, 1, [650], 650)}${mini(519, 606, 2, [636.5, 665.5], 650)}${mini(379, 698.5, 3, [742], 742)}${mini(519, 698.5, 4, [726.5, 757.5], 742)}

      <text class="ext" x="127" y="595" textLength="80">EnergieIn</text><text class="ext" x="136" y="699" textLength="71.500">DatenInt</text>
      <path d="M209 579.500H220L228 588.500L220 597.500H209ZM209 683H220L228 692L220 701H209Z" fill="#808080" stroke="#808080" stroke-width="1"/>
      <path d="M228 588.500H239.500V607.500H254M228 691.500H239.500V766.500H254M757 691.700H815.500V607.500H918M757 794.500H860.500V757H918" stroke=${wire} stroke-width="1.800"/>

      <rect x="933" y="455.500" width="300" height="412.500" fill="#f4f4f4"/><rect x="933" y="455.500" width="300" height="47" fill="#d1d1d1"/>
      <rect x="933" y="455.500" width="300" height="412.500" stroke="#a6a6a6" stroke-width="2"/><path d="M933 503H1233" stroke="#a6a6a6" stroke-width="2"/>
      <text class="bold" x="944" y="490" textLength="192.500">Haupt-Komponente B</text>
      <rect x="968.500" y="345" width="376" height="28.500" fill="#dfd8d0" stroke=${brown} stroke-width="1.400"/>
      <text class="req req2" x="969.500" y="368" textLength="210">#2: Funktionale Anfor</text>
      <path d="M1160.500 380V445.500M1149.500 397.500L1160 380.500L1170.500 397.500" stroke=${brown} stroke-width="1.300"/>
      <rect x="1116.500" y="641.500" width="104" height="83" stroke="#a0a0a0" stroke-width="1.200"/><text class="mid" x="1148" y="651" textLength="31">Compon</text>
      <g fill="#fff" stroke="#d0d0d0"><circle cx="1116" cy="677.500" r="4"/><circle cx="1116" cy="703.500" r="4"/><circle cx="1147" cy="724" r="4"/></g>

      ${port(269, 607.5, "in", "l")}${port(269, 767, "in", "l")}${port(742, 589, "conn", "r")}${port(742, 692, "out", "r")}${port(742, 795, "out", "r")}${port(933, 607.5, "in", "l")}${port(933, 757.5, "in", "l")}
      <text x="286" y="614" textLength="80">EnergieIn</text><text x="286" y="774" textLength="71">DatenInt</text>
      <text x="669.500" y="595" textLength="54">Conn1</text><text x="630" y="699" textLength="95">EnergieOut</text><text x="644.500" y="802" textLength="80.500">DatenOut</text>
      <text x="949.500" y="614" textLength="80">EnergieIn</text><text x="949.500" y="764" textLength="66">DatenIn</text>
      <path d="M1147 931H1152.500V947H1147ZM1155 931H1160.500V947H1155ZM1162.500 931H1178V947H1162.500Z" fill="#989898"/>
    </svg>`;
  }

  render() {
    return html`
      <div class="nav row">
        ${ico(21, 16, svg`<path d="M.8 8L10.500 .8V4.500H20V11.500H10.500V15.200Z" fill="#9cc9e8" stroke="#5285a8" stroke-width="1.200"/>`)}
        <div class="a2">${ico(21, 16, svg`<path d="M20.200 8L10.500 .8V4.500H1V11.500H10.500V15.200Z" fill="#e2e2e2" stroke="#c9c9c9" stroke-width="1.200"/>`)}</div>
        <div class="a3">${ico(19, 20, svg`<path d="M9.500 .8L18 10.500H13.500V19.500H5.500V10.500H1Z" fill="#e2e2e2" stroke="#c9c9c9" stroke-width="1.200"/>`)}</div>
        <div class="doc">${t("Dummy", 53)}</div>
        <div class="kb">${ico(21, 12, svg`<rect x=".7" y=".7" width="19.600" height="10.600" fill="#f0f0f0" stroke="#8c8c8c" stroke-width="1.400"/><path d="M2 3.200H19M2 6H19" stroke="#8c8c8c" stroke-width="1.700" stroke-dasharray="1.900 .8"/><path d="M5 9H16" stroke="#8c8c8c" stroke-width="1.500"/>`)}</div>
      </div>
      <div class="lower">
        ${this.palette()}
        <div class="frame">
          <div class="crumb row">
            ${ico(24, 24, svg`<rect x="1" y="1" width="22" height="22" fill="#fff" stroke="#666" stroke-width="1.600"/><rect x="1" y="1" width="22" height="4" fill="#7f7f7f"/><path d="M9.500 7.500H14V11.500H9.500ZM4 16H8V20.500H4ZM16 16H20V20.500H16Z" stroke="#777" stroke-width="1.400"/>`)}
            ${t("Dummy", 62)}${ico(9, 14, svg`<path d="M0 0L9 7L0 14Z" fill="#000"/>`)}<div class="end">${caret(15, 8, "#000")}</div>
          </div>
          <div class="view">
            <div class="plane">${this.diagram()}
              <div class="tree">${ico(24, 18, svg`<path d="M9.500 0H14.500V5H9.500ZM0 12H5.500V17H0ZM9.300 12H14.700V17H9.300ZM18.500 12H24V17H18.500Z" fill="#000"/><path d="M12 4V12M2.700 12V8.700H21.200V12" stroke="#000" stroke-width="1.500"/>`)}</div>
            </div>
            <div><div class="vbar"></div></div>
            <div><div class="hbar"></div></div>
          </div>
        </div>
      </div>`;
  }
}

/* ---------- requirements browser ---------- */

@customElement("requirements-panel")
class RequirementsPanel extends Pane {
  static styles = [base, css`
    :host { height: 358px; }
    .head { height: 53px; padding: 0 10px 0 10px; }
    .head .ico { margin-left: 15px; margin-bottom: 1px; }
    .bar { height: 34px; padding-left: 8px; color: #111; }
    .sel { height: 27px; background: #fdfdfd; border: 1px solid #d0d0d0; border-bottom-color: #bbb; border-radius: 3px; display: flex; align-items: center; justify-content: space-between; padding: 0 8px 0 4px; margin-bottom: 2px; }
    .s1 { width: 131px; margin-right: 12px; margin-left: 9px; } .s2 { width: 186px; margin-left: 6px; }
    .find { width: 142px; height: 28px; background: #fff; border-bottom: 1px solid #808080; margin: 0 7px 1px auto; padding: 0 2px; display: flex; align-items: center; color: #8c8c8c; }
    .btn { width: 34px; height: 34px; flex: none; background: #fdfdfd; border: 1px solid #d3d3d3; border-bottom-color: #bdbdbd; border-radius: 5px; display: flex; align-items: center; justify-content: center; margin-right: 3px; }
    .btn.m { width: 37px; } .btn.w { width: 38px; } .btn.brk { margin-right: 12px; } .btn.off { background: #f6f6f6; border-color: #e8e8e8; }
    .btn.off .ico { opacity: .38; filter: grayscale(1); }
    .bar > .t { margin-bottom: 2px; }
    .grid { margin: 13px 0 0 2px; height: 256px; border: 1px solid #82868f; background: #fff; padding-right: 2px; color: #464646; }
    .line { display: grid; grid-template-columns: 1fr 362px 412px; height: 29px; border-bottom: 1px solid #dadada; }
    .line > div { display: flex; align-items: center; border-right: 1px solid #dadada; padding-left: 4px; }
    .hd { height: 34px; color: #9a9a9a; } .hd > div { justify-content: center; padding: 0; }
    .root { display: flex; height: 29px; }
    .root .tw { width: 35px; display: flex; align-items: center; padding: 0 0 2px 11px; }
    .root .nm { flex: 1; display: flex; align-items: center; gap: 6px; border: 1px solid #dadada; border-top: 0; padding-left: 3px; }
    .item { margin-left: 71px; border-left: 1px solid #dadada; }
    .item > div:first-child { padding-left: 8px; gap: 9px; }
    .on { background: #efdaea; }
  `];

  private btn(icon: TemplateResult, cls = "") { return html`<div class="btn ${cls}">${icon}</div>`; }

  render() {
    const plus = svg`<path d="M14 12H19V16H23.500V20.500H19V24H14V20.500H10.500V16H14Z" fill="#7cc043" stroke="#3f7d1f" stroke-width="1.200"/>`;
    const sheet = svg`<path d="M2 .8H14L19 5.500V22H2Z" fill="#f2f4f5" stroke="#999" stroke-width="1.200"/><path d="M14 .8V5.500H19" stroke="#999" fill="#fff"/>`;
    const lines = svg`<path d="M11 6H19M13 10H19M13 14H19M8 18H19" stroke="#555" stroke-width="1.600"/>`;
    const rows = ["A", "B", "C", "D"];
    return html`
      <div class="head row">${t("Requirements - Dummy", 164)}<div class="grow"></div>${menuDot}${closeX}</div>
      <div class="bar row">
        ${t("View:", 38)}<div class="sel s1">${t("Requirements", 96)}${chevron()}</div>
        ${this.btn(ico(24, 24, svg`${sheet}<path d="M7 6L13 10L7 14Z" fill="#2478ae"/><path d="M6 2V10M12 10H15V14" stroke="#444"/>${plus}`))}
        ${this.btn(ico(25, 24, svg`<path d="M1 1H9L11 4H23V19H1Z" fill="#d3a84f" stroke="#8f6a1d"/><path d="M4 5H22L24.300 3V18L20 20.500H1.500Z" fill="#f9e6a6" stroke="#a8842f"/><path d="M5 7H21" stroke="#fff7d8" stroke-width="1.500"/>`))}
        ${this.btn(floppyDark, "brk")}
        ${this.btn(ico(24, 24, svg`${sheet}<path d="M5 7H13M5 10H16M5 13H13M5 16H12" stroke="#777" stroke-width="1.300"/>${plus}`), "m")}
        ${this.btn(ico(24, 24, svg`<rect x="1" y="1" width="22" height="22" fill="#eee" stroke="#999"/>${lines}<path d="M2 10L7 6V9H12V11H7V14Z" fill="#555"/>`), "m off")}
        ${this.btn(ico(24, 24, svg`<rect x="1" y="1" width="22" height="22" fill="#eceff2" stroke="#8f8f8f" stroke-width="1.500"/>${lines}<path d="M13 10.500L8 6V9.500H2.500V11.500H8V15Z" fill="#1c5f9f"/>`), "m brk")}
        ${this.btn(ico(24, 24, svg`<path d="M14 1L11 15M13.500 1L12.500 12L16 16" stroke="#666" stroke-width="2"/><circle cx="8.500" cy="19" r="3" stroke="#c4262e" stroke-width="2.400"/><circle cx="16.500" cy="19.500" r="3" stroke="#c4262e" stroke-width="2.400"/>`), "w")}
        ${this.btn(ico(24, 24, svg`<path d="M3 1H11L15 5V16H3Z" fill="#eee" stroke="#666" stroke-width="1.300"/><path d="M5 6H12M5 9H12" stroke="#777"/><path d="M9 7H17L21 11V23H9Z" fill="#f3f3f3" stroke="#666" stroke-width="1.300"/><path d="M11 13H19M11 16H19M11 19H19" stroke="#777" stroke-width="1.200"/>`), "w")}
        ${this.btn(ico(24, 24, svg`<rect x="3" y="3" width="15" height="18" fill="#bbb" stroke="#777"/><rect x="7" y="1" width="7" height="4" fill="#888"/><path d="M10 9H18L21 12V23H10Z" fill="#eee" stroke="#777"/><path d="M12 14H19M12 17H19M12 20H19" stroke="#888"/>`), "w off")}
        ${this.btn(ico(24, 24, svg`<path d="M3 6H21L19 23H5Z" fill="#b5b5b5" stroke="#444" stroke-width="1.500"/><path d="M8 9L8.500 21M12 9V21M16 9L15.500 21" stroke="#555" stroke-width="1.500"/><path d="M1.500 5.500Q2 2.500 7 2.500Q8 .5 12 .5Q16 .5 17 2.500Q22 2.500 22.500 5.500Z" fill="#888" stroke="#333"/>`), "w")}
        ${this.btn(undo("#b3d8ef", "#2d6593"), "w")}${this.btn(redo("#e6e6e6", "#777"), "w off brk")}
        ${this.btn(ico(24, 24, svg`<circle cx="11" cy="10.500" r="10" fill="#999"/><path d="M5 10L9.500 15L17 5" stroke="#fff" stroke-width="3"/><path d="M17 14V24M12 19H23" stroke="#888" stroke-width="4"/>`), "m off")}
        ${this.btn(ico(24, 24, svg`<path d="M23 1.500V10.500H13.500L16.500 8Q11 4 7.500 9.500Q5.500 14 9.500 17.500Q13.500 20 17 16.500L20.500 19.500Q15 24.500 8.500 22.500Q1 19.500 1 12Q1 4 8 1.500Q15 0 19.500 4.500Z" fill="#9cc6e4" stroke="#28598a" stroke-width="1.300"/>`), "m")}
        <div class="sel s2">${t("Filter View", 74)}${chevron()}</div>
        <div class="find">${t("Search", 46)}</div>
      </div>
      <div class="grid">
        <div class="line hd"><div>${t("Index", 40)}</div><div>${t("ID", 16)}</div><div>${t("Summary", 66)}</div></div>
        <div class="root"><div class="tw">${ico(13, 8, svg`<path d="M1 1L6.500 6.500L12 1" stroke="#222" stroke-width="1.700"/>`)}</div>
          <div class="nm">${ico(20, 24, svg`<path d="M.7 .7H14L19.300 5.500V23.300H.7Z" fill="#f2f2f4" stroke="#999" stroke-width="1.200"/><path d="M4 1V9.500H8M9 11H14V14" stroke="#555"/><path d="M6 7L12 10.500L6 14Z" fill="#2478ae"/><rect x="11" y="14.500" width="6" height="6" fill="#d4521f" stroke="#7e2a0b"/>`)}${t("Dummy", 52)}</div></div>
        ${rows.map((r, i) => html`<div class="line item ${i === 0 ? "on" : ""}">
          <div>${i === 0 ? note(16, 17, "#86b6dc", "#3f7099", "#2a5a80") : note(16, 17, "#e6eaed", "#7d7d7d", "#6c6c6c")}${t(String(i + 1), 9)}</div>
          <div>${t("#" + (i + 1), 19)}</div><div>${t("Funktionale Anforderung " + r, 189)}</div></div>`)}
      </div>`;
  }
}

/* ---------- property inspector ---------- */

@customElement("property-inspector")
class PropertyInspector extends Pane {
  static styles = [base, css`
    :host { width: 504px; height: 1106px; border: 2px solid #3a7cb0; background: #fafafa; color: #111; }
    .title { height: 35px; background: #f0f0f0; padding: 0 10px 3px 8px; color: #222; }
    .title .ico { margin-left: 15px; }
    .what { height: 43px; border: 1px solid #bdbdbd; padding-left: 10px; margin-right: 1px; margin-bottom: 4px; }
    .sect { height: 33px; margin: 0 5px 0 4px; border: 1px solid #d3d3d3; border-width: 1px 0; background: #fff; font-weight: bold; font-size: 17px; padding: 1px 0 0 5px; gap: 6px; color: #000; }
    .sect .ico { margin-bottom: 5px; } .sect .side { margin: 0 5px 0 1px; } .sect .side .ico { margin-bottom: 3px; }
    .f { padding: 0 9px 0 8px; height: 28px; }
    .lab { width: 92px; }
    .f.type { margin-top: 6px; height: 27px; } .f.idx { height: 39px; } .f.idx .lab { width: 91px; }
    .sel { height: 27px; background: #fdfdfd; border: 1px solid #d0d0d0; border-bottom-color: #aaa; border-radius: 2px; display: flex; align-items: center; justify-content: space-between; padding: 0 8px 0 3px; }
    .s1 { width: 130px; } .s2 { width: 70px; padding: 0 6px 0 2px; border-bottom-color: #777; margin-left: 6px; } .s3 { width: 62px; padding: 0 6px 0 4px; border-bottom-color: #777; margin-left: 2px; }
    .inp { flex: 1; height: 28px; background: #fff; border: 1px solid #e3e3e3; border-bottom-color: #808080; border-radius: 3px; padding: 1px 0 0 2px; display: flex; align-items: center; }
    .grey { color: #8c8c8c; }
    .sum { margin-top: 9px; }
    .tabs { margin: 11px 0 0 6px; align-items: flex-end; height: 28px; }
    .tb { width: 116px; height: 28px; border: 1px solid #e2e2e2; border-bottom: 0; display: flex; justify-content: center; align-items: center; padding: 0 2px 1px 0; }
    .tb2 { width: 98px; height: 26px; background: #f2f2f2; border-left: 0; padding: 1px 0 0 1px; }
    .ed { margin: 0 8px 0 6px; height: 388px; border: 1px solid #e2e2e2; padding: 3px; }
    .bar { height: 36px; border-bottom: 1px solid #aaa; border-right: 1px solid #aaa; padding-left: 5px; background: #fafafa; }
    .vs { width: 1px; height: 30px; background: #ccc; margin-left: 12px; } .v2 { margin-left: 16px; }
    .fb { width: 24px; height: 24px; margin-left: 14px; background: #f0f0f6; font: bold 20px "Liberation Serif", serif; display: flex; align-items: center; justify-content: center; color: #222; padding-bottom: 2px; }
    .fb.first { margin-left: 8px; -webkit-text-stroke: .6px #222; } .fb.i { font-style: italic; } .fb.u { text-decoration: underline; }
    .ink { width: 16px; height: 16px; background: #000; margin-left: 18px; }
    .al { width: 24px; height: 24px; background: #f0f0f6; margin-left: 14px; display: flex; align-items: center; justify-content: center; }
    .al.on { width: 37px; height: 35px; margin-left: 5px; background: #cce6fb; border: 1px solid #90caf5; border-radius: 3px; }
    .al.next { margin-left: 7px; }
    .chev { margin-left: 13px; }
    .text { height: 344px; background: #fff; border: 1px solid #e2e2e2; border-bottom: 2px solid #0067b8; border-top: 0; padding: 5px 0 0 3px; font-size: 20px; color: #000; display: flex; align-items: flex-start; }
    .text .t { line-height: 26px; }
    .cur { width: 1px; height: 26px; background: #000; }
    .kw { margin-top: 13px; } .kw .lab { width: 85px; }
    .rev { height: 54px; padding-left: 12px; gap: 10px; }
    .list { margin: 4px 6px 0; height: 217px; background: #fff; font-family: "Liberation Sans", Arial, sans-serif; font-size: 20px; padding: 9px 0 0 18px; color: #000; }
    .g { height: 37px; font-weight: bold; } .g .box { margin: -7px 13px 0 0; } .g .t { margin-left: 7px; }
    .l { height: 37px; padding-left: 31px; } .l .t { color: #3232f0; text-decoration: underline; text-decoration-color: #0000e8; text-decoration-thickness: 2px; text-underline-offset: 2px; }
    .l .ico { margin: -6px 7px 0 0; } .l.n { padding-left: 35px; } .l.n .ico { margin: -8px 11px 0 0; }
    .hs { margin: 0 6px 12px; height: 25px; background: #424242; padding: 0 9px; justify-content: space-between; }
    .thumb { width: 250px; height: 21px; background: #686868; margin-right: auto; margin-left: 10px; }
  `];

  private align(kind: number) {
    const ys = [1, 4, 7, 10, 13, 16];
    return ico(22, 18, ys.map((y, i) => {
      const w = i % 2 ? 22 : 15;
      const x = kind === 0 ? 0 : kind === 1 ? (22 - w) / 2 : 22 - w;
      return svg`<path d="M${x} ${y + .5}H${x + w}" stroke="#333" stroke-width="1.900"/>`;
    }));
  }

  render() {
    const box = html`<div class="box">${ico(14, 14, svg`<rect x=".8" y=".8" width="12.400" height="12.400" fill="#fafafa" stroke="#999" stroke-width="1.400"/><path d="M3.500 7H10.500" stroke="#222" stroke-width="1.500"/>`)}</div>`;
    const arrow = (flip: boolean) => ico(19, 15, svg`<g transform=${flip ? "translate(19 0) scale(-1 1)" : ""}><path d="M1 7.500L8 1.500V5H18V10H8V13.500Z" fill="#c2c2c2" stroke="#4e4e4e" stroke-width="1.300"/></g>`);
    return html`
      <div class="title row">${t("Property Inspector", 130)}<div class="grow"></div>${menuDot}${closeX}</div>
      <div class="what row">${t("Requirement: #1", 119)}</div>
      <div class="sect row">${triDown()}${t("Properties", 92)}</div>
      <div class="f type row"><div class="lab">${t("Type:", 36)}</div><div class="sel s1">${t("Functional", 71)}${chevron()}</div></div>
      <div class="f idx row"><div class="lab">${t("Index:", 44)}</div>${t("1", 7)}</div>
      <div class="f row"><div class="lab">${t("Custom ID:", 79)}</div><div class="inp grey">${t("#1", 19)}</div></div>
      <div class="f sum row"><div class="lab">${t("Summary:", 71)}</div><div class="inp">${t("Funktionale Anforderung A", 189)}</div></div>
      <div class="tabs row"><div class="tb">${t("Description", 78)}</div><div class="tb tb2">${t("Rationale", 65)}</div></div>
      <div class="ed">
        <div class="bar row">
          ${ico(24, 24, svg`<path d="M1 .8H12L17 5.500V22H1Z" fill="#e9eff6" stroke="#8e9bab"/><path d="M12 .8V5.500H17" fill="#fff" stroke="#8e9bab"/><path d="M3 9L5.500 17L8 11L10.500 17L13 9" stroke="#2f7fe0" stroke-width="2"/><path d="M11 20L19.500 10.500L23 13.500L14.500 22.500L10.500 23.500Z" fill="#dca552" stroke="#8a6229" stroke-width=".8"/><path d="M19 11L21 9Q24 9.500 24 12L22.500 14Z" fill="#c9506c"/>`)}
          <div class="vs"></div>
          <div class="sel s2">${t("Dlg 2", 38)}${chevron()}</div><div class="sel s3">${t("10", 16)}${chevron()}</div>
          <div class="fb first">B</div><div class="fb i">I</div><div class="fb u">U</div><div class="ink"></div>
          <div class="vs v2"></div>
          <div class="al on">${this.align(0)}</div><div class="al next">${this.align(1)}</div><div class="al">${this.align(2)}</div>
          <div class="chev">${ico(12, 10, svg`<path d="M1 1L5 5L1 9M7 1L11 5L7 9" stroke="#333" stroke-width="1.300"/>`)}</div>
        </div>
        <div class="text">${t("Beschreibung der Funktionalen Anforderung", 388)}<div class="cur"></div></div>
      </div>
      <div class="f kw row"><div class="lab">${t("Keywords:", 72)}</div><div class="inp"></div></div>
      <div class="rev row">${triRight()}${t("Revision information:", 150)}</div>
      <div class="sect row">${triDown()}${t("Links", 46)}</div>
      <div class="list">
        <div class="g row">${box}${arrow(false)}${t("Implemented by:", 157)}</div>
        <div class="l row">${win("plain", 24)}${t("Haupt-Komponente A", 190)}</div>
        <div class="g row">${box}${arrow(true)}${t("Related to:", 102)}</div>
        <div class="l n row">${note(16, 17, "#eceff1", "#888", "#666")}${t("Funktionale Anforderung B", 235)}</div>
      </div>
      <div class="hs row">${ico(6, 12, svg`<path d="M6 0V12L0 6Z" fill="#8a8a8a"/>`)}<div class="thumb"></div>${ico(6, 12, svg`<path d="M0 0V12L6 6Z" fill="#fff"/>`)}</div>
      <div class="sect row"><div class="side">${triRight()}</div>${t("Comments", 95)}</div>`;
  }
}

/* ---------- window ---------- */

@customElement("app-root")
class AppRoot extends Pane {
  static styles = [base, css`
    :host { width: 1720px; height: 1368px; background: #f0f0f0; border: 2px solid #68007f; border-top: 0; display: flex; flex-direction: column; overflow: hidden; }
    .title { height: 45px; background: #68007f; color: #fff; padding: 0 27px 0 11px; gap: 7px; font-family: "Open Sans", sans-serif; font-size: 17.500px; flex: none; }
    .title .ctl { margin-left: 40px; } .title .wide { margin-left: 42px; }
    .main { height: 1107px; display: flex; flex: none; }
    .rail { width: 38px; border-right: 1px solid #b7b7b7; padding: 1px 0 0 1px; }
    .mb { width: 30px; height: 126px; background: #fff; border: 1px solid #cdcdcd; display: flex; align-items: center; justify-content: center; color: #000; padding-left: 2px; }
    .vert { writing-mode: vertical-rl; transform: rotate(180deg); }
    .center { width: 1166px; }
    .right { margin: 1px 0 0 auto; }
    .status { height: 33px; padding: 0 2px 0 6px; font-size: 17px; color: #111; }
    .s1 { flex: 0 0 858px; } .s3 { flex: 1; justify-content: flex-end; color: #15157e; }
    .s3 i { width: 1px; height: 29px; background: #ccc; margin: 0 8px; }
    .grip { align-self: flex-end; margin-bottom: -4px; }
  `];

  render() {
    return html`
      <div class="title row">${simLogo(25)}${t("Dummy - Simulink academic use", 259)}<div class="grow"></div>
        ${ico(15, 15, svg`<path d="M0 7.500H15" stroke="#fff" stroke-width="1.300"/>`)}
        <div class="ctl"></div>${ico(15, 15, svg`<rect x=".8" y=".8" width="13.400" height="13.400" rx="1.500" stroke="#fff" stroke-width="1.400"/>`)}
        <div class="ctl wide"></div>${ico(15, 15, svg`<path d="M.5 .5L14.500 14.500M14.500 .5L.5 14.500" stroke="#fff" stroke-width="1.400"/>`)}
      </div>
      <tool-strip></tool-strip>
      <div class="main">
        <div class="rail"><div class="mb">${t("Model Browser", 104, "vert")}</div></div>
        <div class="center"><model-editor></model-editor><requirements-panel></requirements-panel></div>
        <div class="right"><property-inspector></property-inspector></div>
      </div>
      <div class="status row"><div class="s1">${t("Ready", 47)}</div>${t("125%", 43)}
        <div class="s3 row">${t("VariableStepAuto", 134)}<i></i><div class="grip">${ico(11, 12, svg`<path d="M8 0H11V3H8ZM4 4.500H7V7.500H4ZM8 4.500H11V7.500H8ZM0 9H3V12H0ZM4 9H7V12H4ZM8 9H11V12H8Z" fill="#bfbfbf"/>`)}</div></div>
      </div>`;
  }
}
